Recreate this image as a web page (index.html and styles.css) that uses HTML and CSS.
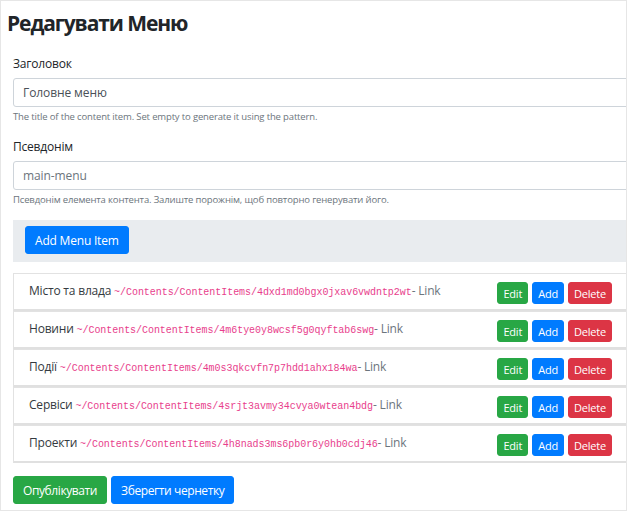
FILE: index.html
```html
<!DOCTYPE html>
<html lang="uk">
<head>
<meta charset="utf-8">
<title>Редагувати Меню</title>
<link rel="stylesheet" href="styles.css">
</head>
<body>
<div class="frame">
  <h1 class="title">Редагувати Меню</h1>
  <div class="field">
    <label class="label">Заголовок</label>
    <div class="input">Головне меню</div>
    <div class="hint">The title of the content item. Set empty to generate it using the pattern.</div>
  </div>
  <div class="field">
    <label class="label">Псевдонім</label>
    <div class="input muted">main-menu</div>
    <div class="hint">Псевдонім елемента контента. Залиште порожнім, щоб повторно генерувати його.</div>
  </div>
  <div class="toolbar">
    <button class="btn btn-primary btn-md">Add Menu Item</button>
  </div>
  <ul class="items">
    <li class="item">
      <span class="name">Місто та влада <code>~/Contents/ContentItems/4dxd1md0bgx0jxav6vwdntp2wt</code><span class="link">- Link</span></span>
      <span class="actions"><button class="btn btn-success btn-sm">Edit</button><button class="btn btn-primary btn-sm">Add</button><button class="btn btn-danger btn-sm">Delete</button></span>
    </li>
    <li class="item">
      <span class="name">Новини <code>~/Contents/ContentItems/4m6tye0y8wcsf5g0qyftab6swg</code><span class="link">- Link</span></span>
      <span class="actions"><button class="btn btn-success btn-sm">Edit</button><button class="btn btn-primary btn-sm">Add</button><button class="btn btn-danger btn-sm">Delete</button></span>
    </li>
    <li class="item">
      <span class="name">Події <code>~/Contents/ContentItems/4m0s3qkcvfn7p7hdd1ahx184wa</code><span class="link">- Link</span></span>
      <span class="actions"><button class="btn btn-success btn-sm">Edit</button><button class="btn btn-primary btn-sm">Add</button><button class="btn btn-danger btn-sm">Delete</button></span>
    </li>
    <li class="item">
      <span class="name">Сервіси <code>~/Contents/ContentItems/4srjt3avmy34cvya0wtean4bdg</code><span class="link">- Link</span></span>
      <span class="actions"><button class="btn btn-success btn-sm">Edit</button><button class="btn btn-primary btn-sm">Add</button><button class="btn btn-danger btn-sm">Delete</button></span>
    </li>
    <li class="item">
      <span class="name">Проекти <code>~/Contents/ContentItems/4h8nads3ms6pb0r6y0hb0cdj46</code><span class="link">- Link</span></span>
      <span class="actions"><button class="btn btn-success btn-sm">Edit</button><button class="btn btn-primary btn-sm">Add</button><button class="btn btn-danger btn-sm">Delete</button></span>
    </li>
  </ul>
  <div class="footer">
    <button class="btn btn-success btn-md">Опублікувати</button>
    <button class="btn btn-primary btn-md">Зберегти чернетку</button>
  </div>
</div>
</body>
</html>
```

FILE: styles.css
```css
* { box-sizing: border-box; }
html, body { margin: 0; padding: 0; background: #fff; }
body {
  font-family: "Open Sans", "Noto Sans", sans-serif;
  color: #212529;
}
.frame {
  width: 627px;
  height: 511px;
  border: 1px solid #e6e6e6;
  overflow: hidden;
  padding: 0 0 0 12px;
}
.frame > * { width: 640px; }
.title {
  margin: 7px 0 0 -6px;
  font-size: 21px;
  font-weight: 700;
  line-height: 30px;
  letter-spacing: -1.1px;
  color: #212529;
}
.field { margin-top: 18px; }
.field + .field { margin-top: 15px; }
.label {
  display: block;
  font-size: 12px;
  line-height: 16px;
  margin-bottom: 6px;
  letter-spacing: -0.2px;
}
.input {
  height: 29px;
  border: 1px solid #ced4da;
  border-radius: 3px;
  padding: 0 9px;
  font-size: 12px;
  line-height: 27px;
  color: #495057;
  letter-spacing: -0.1px;
}
.input.muted { color: #6c757d; }
.hint {
  font-size: 9.5px;
  line-height: 14px;
  margin-top: 3px;
  color: #6c757d;
  letter-spacing: -0.15px;
}
.toolbar {
  margin-top: 13px;
  background: #e9ecef;
  padding: 6px 12px 7px;
  height: 42px;
}
.btn {
  font-family: inherit;
  border: 1px solid transparent;
  border-radius: 3px;
  color: #fff;
  cursor: pointer;
  letter-spacing: -0.2px;
}
.btn-md {
  font-size: 12px;
  height: 28px;
  padding: 0 9px;
}
.btn-sm {
  font-size: 11px;
  height: 22px;
  padding: 0 5px;
}
.btn-primary { background: #007bff; border-color: #007bff; }
.btn-success { background: #28a745; border-color: #28a745; }
.btn-danger { background: #dc3545; border-color: #dc3545; }
.items {
  list-style: none;
  margin: 11px 0 0;
  padding: 0;
  width: 614px !important;
}
.item {
  display: flex;
  align-items: center;
  justify-content: space-between;
  height: 38px;
  border: 1px solid #e2e2e2;
  border-bottom: 2px solid #e0e0e0;
  padding: 0 14px 0 15px;
}
.name {
  font-size: 12px;
  letter-spacing: -0.2px;
  color: #343a40;
  margin-top: -3px;
}
code {
  font-family: "Liberation Mono", "DejaVu Sans Mono", monospace;
  font-size: 10px;
  color: #e83e8c;
  letter-spacing: -0.05px;
}
.link { color: #6c757d; }
.actions { display: flex; gap: 4px; margin-top: 3px; }
.footer {
  margin-top: 13px;
  display: flex;
  gap: 4px;
}
.footer .btn { letter-spacing: -0.4px; }
```
